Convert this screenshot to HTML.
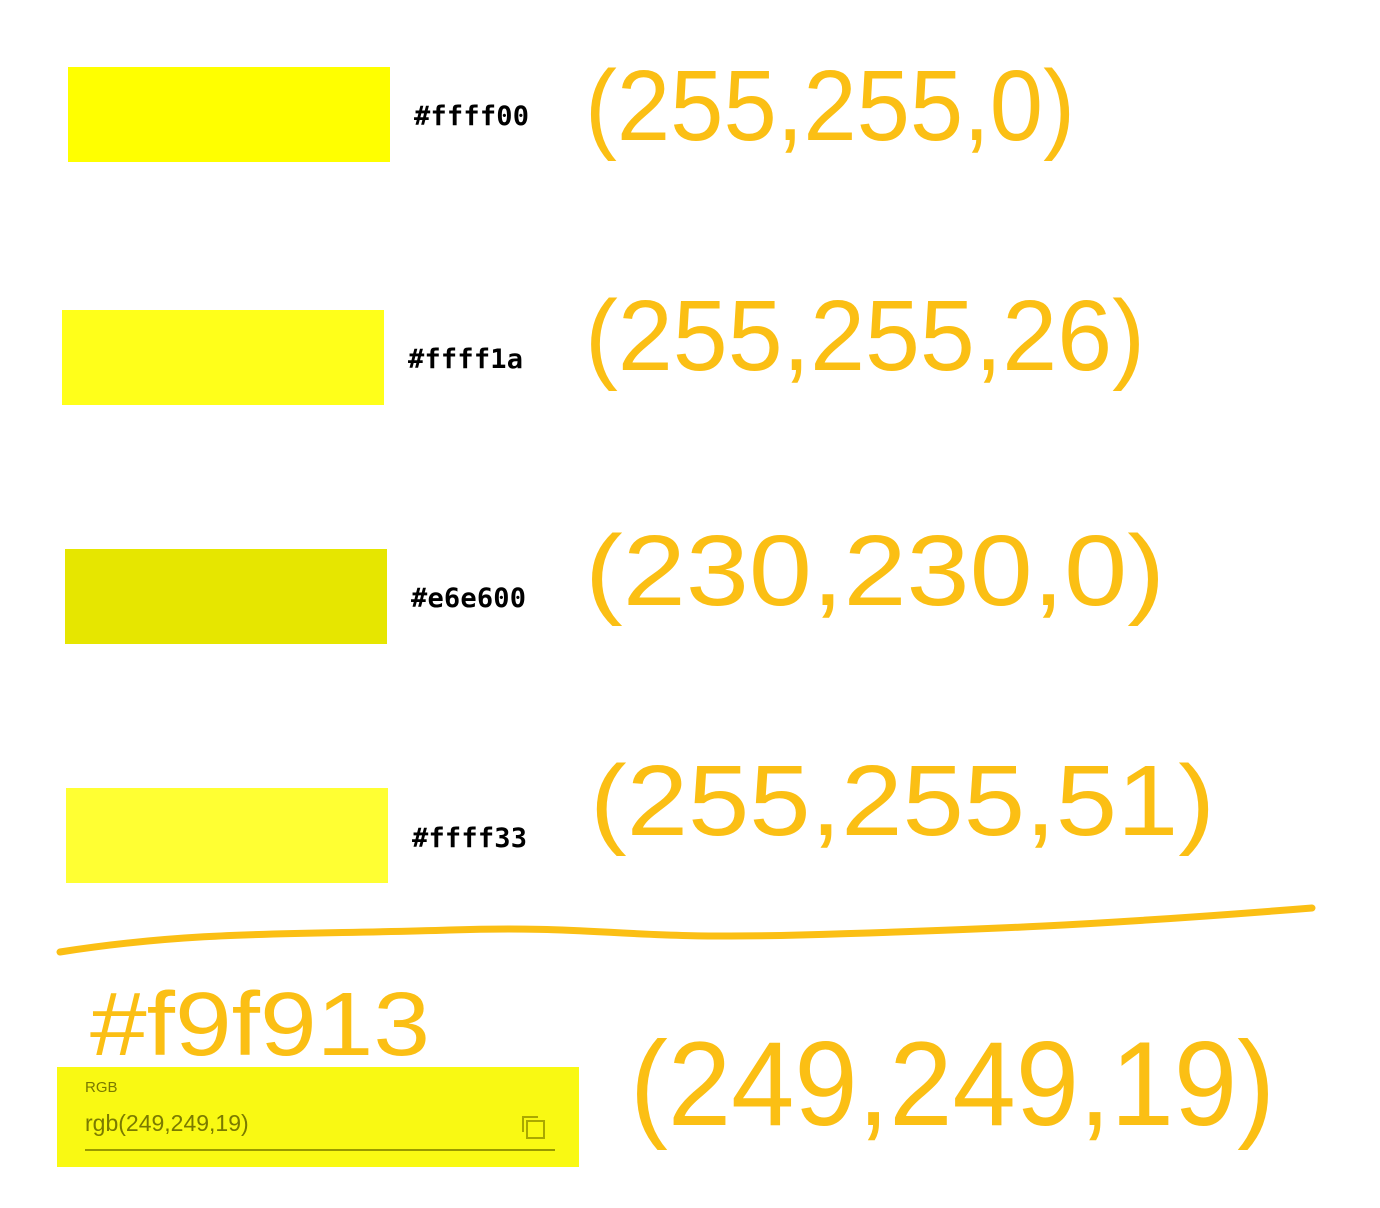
<!DOCTYPE html>
<html><head><meta charset="utf-8"><style>
html,body{margin:0;padding:0;background:#fff;width:1380px;height:1208px;overflow:hidden;position:relative;font-family:"Liberation Sans",sans-serif}
.sw{position:absolute;width:322px;height:95px}
.hx{position:absolute;font-family:"DejaVu Sans Mono","Liberation Mono",monospace;font-weight:bold;font-size:27px;color:#000;letter-spacing:0.2px}
svg{position:absolute;left:0;top:0}
.h{font-family:"Liberation Sans",sans-serif;fill:#fbbf14}
</style></head><body>
<div class="sw" style="left:68px;top:67px;background:#ffff00"></div>
<div class="hx" style="left:414px;top:101px">#ffff00</div>
<div class="sw" style="left:62px;top:310px;background:#ffff1a"></div>
<div class="hx" style="left:408px;top:344px">#ffff1a</div>
<div class="sw" style="left:65px;top:549px;background:#e6e600"></div>
<div class="hx" style="left:411px;top:583px">#e6e600</div>
<div class="sw" style="left:66px;top:788px;background:#ffff33"></div>
<div class="hx" style="left:412px;top:823px">#ffff33</div>

<div style="position:absolute;left:57px;top:1067px;width:522px;height:100px;background:#f9f913">
 <div style="position:absolute;left:28px;top:12px;font-size:15px;color:#7a7a00">RGB</div>
 <div style="position:absolute;left:28px;top:43px;font-size:23px;color:#7a7a00">rgb(249,249,19)</div>
 <div style="position:absolute;left:28px;top:82px;width:470px;height:2px;background:#9a9a00"></div>
 <div style="position:absolute;left:465px;top:49px;width:14px;height:14px;border-left:2px solid #aaa800;border-top:2px solid #aaa800"></div>
 <div style="position:absolute;left:469px;top:53px;width:15px;height:15px;border:2px solid #aaa800"></div>
</div>

<svg width="1380" height="1208">
 <text class="h" x="585" y="140" font-size="100" textLength="490" lengthAdjust="spacingAndGlyphs">(255,255,0)</text>
 <text class="h" x="585" y="370" font-size="100" textLength="560" lengthAdjust="spacingAndGlyphs">(255,255,26)</text>
 <text class="h" x="585" y="605" font-size="100" textLength="580" lengthAdjust="spacingAndGlyphs">(230,230,0)</text>
 <text class="h" x="590" y="835" font-size="100" textLength="625" lengthAdjust="spacingAndGlyphs">(255,255,51)</text>
 <text class="h" x="90" y="1055" font-size="90" textLength="340" lengthAdjust="spacingAndGlyphs">#f9f913</text>
 <text class="h" x="630" y="1125" font-size="120" textLength="645" lengthAdjust="spacingAndGlyphs">(249,249,19)</text>
 <path d="M60 952 C200 930,300 935,450 930 S620 940,800 935 S1100 925,1312 908" fill="none" stroke="#fbbf14" stroke-width="7" stroke-linecap="round"/>
</svg>
</body></html>
